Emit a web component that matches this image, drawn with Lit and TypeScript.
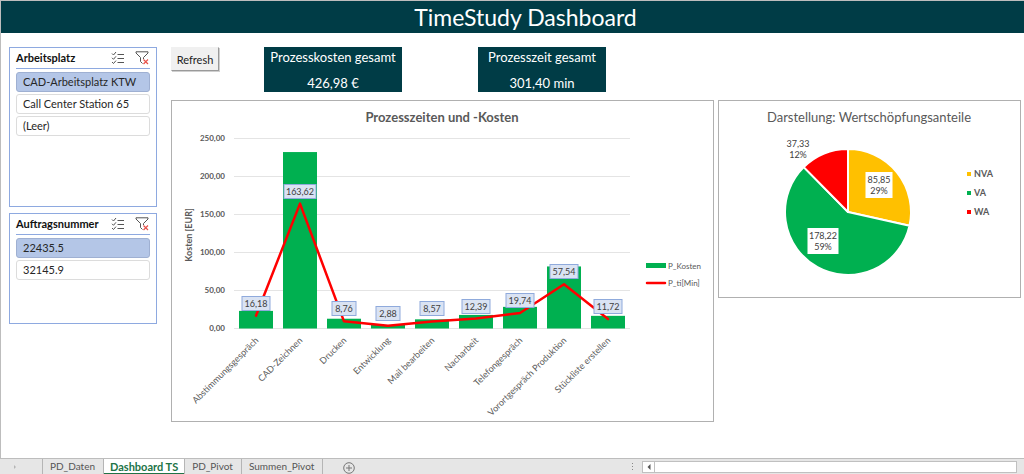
import { LitElement, html, svg, css } from "lit";
import { customElement, property, state } from "lit/decorators.js";
import { classMap } from "lit/directives/class-map.js";

const fmt = (n: number) => n.toFixed(2).replace(".", ",");

@customElement("slicer-panel")
class SlicerPanel extends LitElement {
  @property() heading = "";
  @property({ type: Array }) items: string[] = [];
  @state() selected = 0;

  static styles = css`
    :host { display: block; box-sizing: border-box; border: 1px solid #8ea9e0; background: #fff; padding: 0 6px; }
    .head { display: flex; align-items: center; height: 20px; border-bottom: 1px solid #8ea9e0; }
    .title { flex: 1; margin: 0; font-size: 11px; line-height: 20px; font-weight: 700; color: #111; }
    .icon { border: 0; background: none; padding: 0; display: block; width: 14px; height: 14px; margin-right: 1px; margin-left: 9px; }
    .icon svg { display: block; }
    .list { list-style: none; margin: 0; padding: 3px 0 0; display: flex; flex-direction: column; gap: 2px; }
    .item {
      display: block; box-sizing: border-box; width: 100%; height: 20px; padding: 0 6px; text-align: left;
      font-family: inherit; font-size: 11px; line-height: 18px; color: #262626; white-space: nowrap;
      border: 1px solid #dcdcdc; border-radius: 3px; background: #fff;
    }
    .item.on { background: #b4c6e7; border-color: #9fb0d2; }
  `;

  render() {
    return html`
      <div class="head">
        <h2 class="title">${this.heading}</h2>
        <button class="icon" aria-label="Mehrfachauswahl">
          <svg width="14" height="14" viewBox="0 0 14 14" fill="none" stroke="#555">
            <path d="M1 2.5l1.5 1.5L5 1M1 6.8l1.5 1.5L5 5.3M1 11l1.5 1.5L5 9.6M6.5 3.5H13M6.5 7.5H13M6.5 11.5H13" />
          </svg>
        </button>
        <button class="icon" aria-label="Filter löschen">
          <svg width="14" height="14" viewBox="0 0 14 14" fill="none">
            <path d="M7.5 12.5L5.5 10.5V6.5L1 2V.8H13V2L8.5 6.5V8" stroke="#555" />
            <path d="M8.5 8.5l4.5 4.5M13 8.5L8.5 13" stroke="#e8514a" stroke-width="1.2" />
          </svg>
        </button>
      </div>
      <ul class="list">
        ${this.items.map(
          (t, i) => html`<li>
            <button class=${classMap({ item: true, on: i === this.selected })}
              aria-pressed=${i === this.selected} @click=${() => (this.selected = i)}>${t}</button>
          </li>`
        )}
      </ul>
    `;
  }
}

interface Process { name: string; cost: number; time: number; }

const PROCESSES: Process[] = [
  { name: "Abstimmungsgespräch", cost: 22.5, time: 16.18 },
  { name: "CAD-Zeichnen", cost: 231.5, time: 163.62 },
  { name: "Drucken", cost: 12.2, time: 8.76 },
  { name: "Entwicklung", cost: 4, time: 2.88 },
  { name: "Mail bearbeiten", cost: 11.4, time: 8.57 },
  { name: "Nacharbeit", cost: 17.2, time: 12.39 },
  { name: "Telefongespräch", cost: 27.8, time: 19.74 },
  { name: "Vorortgespräch Produktion", cost: 81, time: 57.54 },
  { name: "Stückliste erstellen", cost: 16, time: 11.72 },
];

@customElement("process-chart")
class ProcessChart extends LitElement {
  static styles = css`
    :host { display: block; box-sizing: border-box; border: 1px solid #b0b0b0; background: #fff; }
    svg { display: block; width: 100%; height: auto; }
    .title { font-size: 13px; font-weight: 700; fill: #595959; text-anchor: middle; }
    .tick { font-size: 8px; font-weight: 700; fill: #595959; text-anchor: end; }
    .axis { font-size: 9px; font-weight: 700; fill: #595959; text-anchor: middle; }
    .cat { font-size: 9px; fill: #595959; text-anchor: end; }
    .val { font-size: 9px; fill: #404040; text-anchor: middle; }
    .leg { font-size: 8px; fill: #595959; }
    .grid { stroke: #e4e4e4; }
    .bar { fill: #00b050; }
    .line { fill: none; stroke: #ff0000; stroke-width: 2.5; stroke-linejoin: round; stroke-linecap: round; }
    .tag { fill: #dae3f3; stroke: #8faadc; }
  `;

  render() {
    const left = 62, step = 44, base = 227, unit = 0.76;
    const cx = (i: number) => left + step * i + step / 2;
    const y = (v: number) => base - v * unit;
    const points = PROCESSES.map((p, i) => `${cx(i)},${y(p.time)}`).join(" ");
    return html`
      <svg viewBox="0 0 541 320" role="img" aria-label="Prozesszeiten und -Kosten">
        <text class="title" x="270" y="21">Prozesszeiten und -Kosten</text>
        <text class="axis" transform="translate(20 134) rotate(-90)">Kosten [EUR]</text>
        ${[0, 50, 100, 150, 200, 250].map(
          (v) => svg`<line class="grid" x1=${left} x2=${left + step * 9} y1=${y(v) + 0.5} y2=${y(v) + 0.5} />
            <text class="tick" x="53" y=${y(v) + 3}>${fmt(v)}</text>`
        )}
        ${PROCESSES.map(
          (p, i) => svg`<rect class="bar" x=${cx(i) - 17} y=${y(p.cost)} width="34" height=${p.cost * unit + 0.5} />
            <text class="cat" transform="translate(${cx(i) + 3} 240) rotate(-45)">${p.name}</text>`
        )}
        <polyline class="line" points=${points} />
        ${PROCESSES.map((p, i) => {
          const label = fmt(p.time);
          const w = label.length * 4 + 8;
          const top = Math.round(y(p.time)) - 19.5;
          return svg`<rect class="tag" x=${cx(i) - w / 2} y=${top} width=${w} height="14" />
            <text class="val" x=${cx(i)} y=${top + 10}>${label}</text>`;
        })}
        <rect class="bar" x="474" y="162" width="20" height="5" />
        <text class="leg" x="496" y="168">P_Kosten</text>
        <line class="line" x1="475" x2="493" y1="182" y2="182" />
        <text class="leg" x="496" y="185">P_ti[Min]</text>
      </svg>
    `;
  }
}

const SHARES = [
  { name: "NVA", value: 85.85, pct: "29%", color: "#ffc000", lx: 160, ly: 84, boxed: true },
  { name: "VA", value: 178.22, pct: "59%", color: "#00b050", lx: 104, ly: 140, boxed: true },
  { name: "WA", value: 37.33, pct: "12%", color: "#ff0000", lx: 79, ly: 48, boxed: false },
];

@customElement("share-chart")
class ShareChart extends LitElement {
  static styles = css`
    :host { display: block; box-sizing: border-box; border: 1px solid #b0b0b0; background: #fff; }
    svg { display: block; width: 100%; height: auto; }
    .title { font-size: 13px; fill: #595959; text-anchor: middle; }
    .val { font-size: 9px; fill: #404040; text-anchor: middle; }
    .leg { font-size: 9px; font-weight: 700; fill: #595959; }
    .slice { stroke: #fff; stroke-width: 2; stroke-linejoin: round; }
    .tag { fill: #fff; }
  `;

  render() {
    const cx = 129, cy = 111, r = 63;
    const total = SHARES.reduce((s, d) => s + d.value, 0);
    let angle = 0;
    const pos = (a: number) => `${cx + r * Math.sin(a)} ${cy - r * Math.cos(a)}`;
    return html`
      <svg viewBox="0 0 301 196" role="img" aria-label="Darstellung: Wertschöpfungsanteile">
        <text class="title" x="150" y="21">Darstellung: Wertschöpfungsanteile</text>
        ${SHARES.map((d) => {
          const from = angle;
          angle += (d.value / total) * Math.PI * 2;
          const large = angle - from > Math.PI ? 1 : 0;
          return svg`<path class="slice" fill=${d.color}
            d="M${cx} ${cy}L${pos(from)}A${r} ${r} 0 ${large} 1 ${pos(angle)}Z" />`;
        })}
        ${SHARES.map((d, i) => {
          const label = fmt(d.value);
          const w = label.length * 4 + 7;
          return svg`${d.boxed ? svg`<rect class="tag" x=${d.lx - w / 2} y=${d.ly - 13} width=${w} height="26" />` : ""}
            <text class="val" x=${d.lx} y=${d.ly - 2}>${label}</text>
            <text class="val" x=${d.lx} y=${d.ly + 9}>${d.pct}</text>
            <rect x="248" y=${71 + i * 19} width="4" height="4" fill=${d.color} />
            <text class="leg" x="255" y=${76 + i * 19}>${d.name}</text>`;
        })}
      </svg>
    `;
  }
}

@customElement("app-root")
class AppRoot extends LitElement {
  @state() sheet = "Dashboard TS";

  static styles = css`
    :host {
      display: flex; flex-direction: column; min-height: 100vh; box-sizing: border-box;
      font-family: Lato, "Open Sans", sans-serif; background: #e6e6e6;
    }
    .sheet {
      flex: 1; display: flex; flex-direction: column; background: #fff;
      border: solid #bdbdbd; border-width: 1px 0 1px 1px;
    }
    .banner {
      margin: 0; padding-left: 26px; background: #003c46; color: #fff; text-align: center;
      font-size: 23px; line-height: 32px; font-weight: 400;
    }
    .board { display: flex; align-items: flex-start; gap: 14px; padding: 14px 3px 14px 8px; }
    .slicers { flex: none; width: 148px; display: flex; flex-direction: column; gap: 6px; }
    .tall { min-height: 160px; }
    .short { min-height: 111px; }
    .content { flex: 1; min-width: 0; display: flex; flex-direction: column; gap: 8px; }
    .tools { display: flex; align-items: flex-start; }
    .refresh {
      box-sizing: border-box; width: 48px; height: 24px; padding: 0; margin-right: 45px;
      font-family: inherit; font-size: 11px; color: #222; background: #f0f0f0;
      border: 1px solid; border-color: #f0f0f0 #9a9a9a #9a9a9a #f0f0f0; box-shadow: 1px 1px 0 #cfcfcf;
    }
    .kpi {
      box-sizing: border-box; height: 45px; padding: 1px 6px 0; background: #003c46; color: #fff;
      display: flex; flex-direction: column; justify-content: space-between; align-items: center;
      font-size: 13px; line-height: 18px; white-space: nowrap;
    }
    .kpi p { margin: 0; }
    .cost { width: 138px; margin-right: 76px; }
    .time { width: 128px; }
    .charts { display: grid; grid-template-columns: 543fr 303fr; gap: 4px; align-items: start; }
    .bar { display: flex; align-items: stretch; height: 15px; font-size: 10px; color: #555; }
    .nav { width: 42px; display: flex; align-items: center; justify-content: center; padding-right: 12px; box-sizing: border-box; }
    .tabs { display: flex; }
    .tab {
      border: 0; border-left: 1px solid #b5b5b5; background: none; padding: 0 8px 0 7px; margin: 0;
      font: inherit; line-height: 15px; color: #555; white-space: nowrap;
    }
    .tab:last-child { border-right: 1px solid #b5b5b5; }
    .tab.on { background: #fff; color: #217346; font-size: 11px; font-weight: 700; box-shadow: inset 0 -1px 0 #217346; padding: 0 6px; }
    .add { border: 0; background: none; padding: 2px 0 0; margin-left: 20px; }
    .add svg, .nav svg, .arrow svg { display: block; }
    .fill { flex: 1; }
    .grip { display: flex; flex-direction: column; justify-content: center; gap: 2px; margin-right: 9px; }
    .grip i { width: 1px; height: 1px; background: #888; }
    .scroll { display: flex; width: 375px; max-width: 40vw; margin: 2px 7px 1px 0; }
    .arrow { border: 1px solid #c0c0c0; background: #fff; padding: 0; width: 13px; display: flex; align-items: center; justify-content: center; box-sizing: border-box; }
    .thumb { flex: 1; border: 1px solid #c0c0c0; border-left: 0; background: #fff; }
  `;

  render() {
    return html`
      <main class="sheet">
        <h1 class="banner">TimeStudy Dashboard</h1>
        <div class="board">
          <aside class="slicers">
            <slicer-panel class="tall" heading="Arbeitsplatz"
              .items=${["CAD-Arbeitsplatz KTW", "Call Center Station 65", "(Leer)"]}></slicer-panel>
            <slicer-panel class="short" heading="Auftragsnummer" .items=${["22435.5", "32145.9"]}></slicer-panel>
          </aside>
          <section class="content">
            <div class="tools">
              <button class="refresh">Refresh</button>
              <div class="kpi cost"><p>Prozesskosten gesamt</p><p>426,98 €</p></div>
              <div class="kpi time"><p>Prozesszeit gesamt</p><p>301,40 min</p></div>
            </div>
            <div class="charts">
              <process-chart></process-chart>
              <share-chart></share-chart>
            </div>
          </section>
        </div>
      </main>
      <footer class="bar">
        <div class="nav"><svg width="4" height="6" viewBox="0 0 4 6"><path d="M1 1l2 2-2 2z" fill="#b5b5b5" /></svg></div>
        <nav class="tabs" aria-label="Tabellenblätter">
          ${["PD_Daten", "Dashboard TS", "PD_Pivot", "Summen_Pivot"].map(
            (t) => html`<button class=${classMap({ tab: true, on: t === this.sheet })}
              @click=${() => (this.sheet = t)}>${t}</button>`
          )}
        </nav>
        <button class="add" aria-label="Neues Blatt">
          <svg width="12" height="12" viewBox="0 0 12 12" fill="none" stroke="#777">
            <circle cx="6" cy="6" r="5.3" /><path d="M6 3v6M3 6h6" />
          </svg>
        </button>
        <div class="fill"></div>
        <div class="grip"><i></i><i></i><i></i></div>
        <div class="scroll">
          <button class="arrow" aria-label="Nach links">
            <svg width="4" height="6" viewBox="0 0 4 6"><path d="M3.5 0v6L.5 3z" fill="#555" /></svg>
          </button>
          <div class="thumb"></div>
        </div>
      </footer>
    `;
  }
}
